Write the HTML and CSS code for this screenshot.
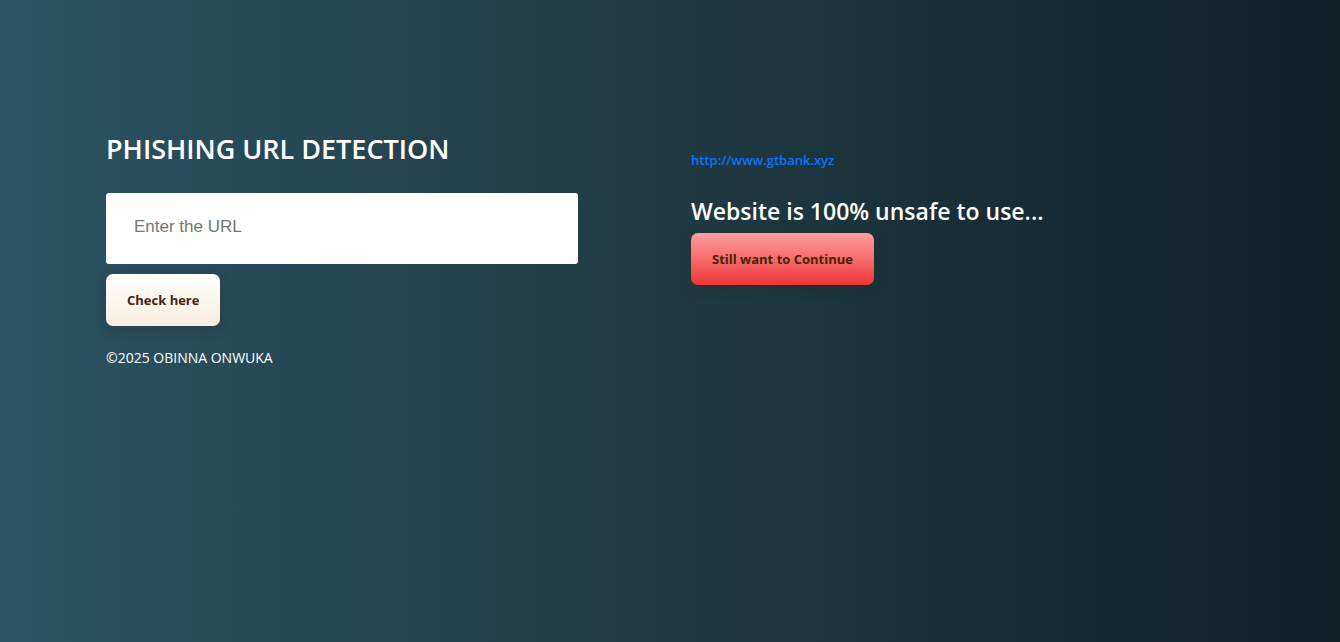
FILE: index.html
```html
<!DOCTYPE html>
<html lang="en">
<head>
<meta charset="utf-8">
<title>Phishing URL Detection</title>
<meta name="viewport" content="width=device-width, initial-scale=1">
<link rel="stylesheet" href="styles.css">
</head>
<body>
<main class="container">
  <section class="column">
    <h1 class="title">PHISHING URL DETECTION</h1>
    <form class="form">
      <input class="url-input" type="text" name="url" placeholder="Enter the URL" aria-label="Enter the URL">
      <button class="button" type="submit">Check here</button>
    </form>
    <p class="copyright">©2025 OBINNA ONWUKA</p>
  </section>
  <section class="column result">
    <a class="link" href="http://www.gtbank.xyz">http://www.gtbank.xyz</a>
    <h2 class="verdict">Website is 100% unsafe to use...</h2>
    <button class="button danger" type="button">Still want to Continue</button>
  </section>
</main>
</body>
</html>
```
FILE: styles.css
```css
* {
  box-sizing: border-box;
}

body {
  margin: 0;
  min-height: 100vh;
  color: #fff;
  font: 14px/20px "Segoe UI", "Open Sans", "Noto Sans", sans-serif;
  background: linear-gradient(to left, #0f2027, #203a43, #2c5364);
}

.container {
  display: grid;
  grid-template-columns: 472fr 543fr;
  column-gap: 113px;
  padding: 132px 106px 0;
}

.column {
  display: flex;
  flex-direction: column;
  align-items: flex-start;
}

.title {
  margin: 0 0 27px;
  font-size: 27px;
  line-height: 34px;
  font-weight: 600;
}

.form {
  display: flex;
  flex-direction: column;
  align-items: flex-start;
  gap: 10px;
  width: 100%;
}

.url-input {
  width: 100%;
  padding: 22px 28px 26px;
  border: 0;
  border-radius: 3px;
  background: #fff;
  font: 17px/23px "Liberation Sans", sans-serif;
}

.url-input::placeholder {
  color: #757575;
}

.button {
  height: 52px;
  padding: 0 21px;
  border: 0;
  border-radius: 7px;
  background: linear-gradient(#fff, #f8eedb);
  box-shadow: 0 4px 12px rgba(46, 35, 20, 0.3);
  color: #482307;
  font: 700 13px/20px "Segoe UI", "Open Sans", sans-serif;
  cursor: pointer;
}

.danger {
  background: linear-gradient(#ff9f9f, #ee3636);
}

.copyright {
  margin: 22px 0 0;
  font-size: 14px;
}

.result {
  padding-top: 18px;
}

.link {
  color: #0d73fd;
  font-size: 13px;
  font-weight: 600;
  text-decoration: none;
}

.verdict {
  margin: 26px 0 6px;
  font-size: 23px;
  line-height: 31px;
  font-weight: 600;
}

@media (max-width: 900px) {
  .container {
    grid-template-columns: 1fr;
    padding: 48px 24px;
  }
}
```
